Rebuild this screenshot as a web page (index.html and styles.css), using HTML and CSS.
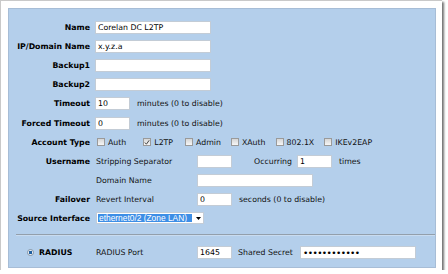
FILE: index.html
```html
<!DOCTYPE html>
<html lang="en">

<head>
  <meta charset="UTF-8">
  <title>L2TP Server Settings</title>
  <link rel="stylesheet" href="styles.css">
</head>

<body>
  <div class="shot_frame">
    <div class="vpn_panel">
      <div class="vpn_form">
        <div class="vpn_label">Name</div>
        <div class="vpn_value"><input class="vpn_input vpn_wide" type="text" value="Corelan DC L2TP"></div>

        <div class="vpn_label">IP/Domain Name</div>
        <div class="vpn_value"><input class="vpn_input vpn_wide" type="text" value="x.y.z.a"></div>

        <div class="vpn_label">Backup1</div>
        <div class="vpn_value"><input class="vpn_input vpn_wide" type="text" value=""></div>

        <div class="vpn_label">Backup2</div>
        <div class="vpn_value"><input class="vpn_input vpn_wide" type="text" value=""></div>

        <div class="vpn_label">Timeout</div>
        <div class="vpn_value">
          <input class="vpn_input vpn_short" type="text" value="10">
          <span class="vpn_after">minutes (0 to disable)</span>
        </div>

        <div class="vpn_label">Forced Timeout</div>
        <div class="vpn_value">
          <input class="vpn_input vpn_short" type="text" value="0">
          <span class="vpn_after">minutes (0 to disable)</span>
        </div>

        <div class="vpn_label">Account Type</div>
        <div class="vpn_value vpn_checks">
          <span class="vpn_check vpn_c1"><span class="vpn_box"></span>Auth</span>
          <span class="vpn_check vpn_c2"><span class="vpn_box vpn_box_on">
              <svg width="7" height="7" viewBox="0 0 7 7"><path d="M1 3.5 L2.8 5.5 L6 1" fill="none" stroke="#3a3a3a" stroke-width="1.1"/></svg>
            </span>L2TP</span>
          <span class="vpn_check vpn_c3"><span class="vpn_box"></span>Admin</span>
          <span class="vpn_check vpn_c4"><span class="vpn_box"></span>XAuth</span>
          <span class="vpn_check vpn_c5"><span class="vpn_box"></span>802.1X</span>
          <span class="vpn_check"><span class="vpn_box"></span>IKEv2EAP</span>
        </div>

        <div class="vpn_label">Username</div>
        <div class="vpn_value">
          <span class="vpn_sub">Stripping Separator</span>
          <input class="vpn_input vpn_short" type="text" value="">
          <span class="vpn_occ">Occurring</span>
          <input class="vpn_input vpn_short" type="text" value="1">
          <span class="vpn_after">times</span>
        </div>

        <div class="vpn_label"></div>
        <div class="vpn_value">
          <span class="vpn_sub">Domain Name</span>
          <input class="vpn_input vpn_wide" type="text" value="">
        </div>

        <div class="vpn_label">Failover</div>
        <div class="vpn_value">
          <span class="vpn_sub">Revert Interval</span>
          <input class="vpn_input vpn_short" type="text" value="0">
          <span class="vpn_after">seconds (0 to disable)</span>
        </div>

        <div class="vpn_label">Source Interface</div>
        <div class="vpn_value">
          <div class="vpn_select">
            <span class="vpn_selected">ethernet0/2 (Zone LAN)</span>
            <svg class="vpn_arrow" width="5" height="3" viewBox="0 0 5 3"><path d="M0 0 H5 L2.5 3 Z" fill="#000"/></svg>
          </div>
        </div>
      </div>

      <div class="vpn_sep"></div>

      <div class="vpn_form vpn_radius">
        <div class="vpn_radio_cell">
          <span class="vpn_radio"></span>RADIUS
        </div>
        <div class="vpn_value">
          <span class="vpn_sub">RADIUS Port</span>
          <input class="vpn_input vpn_short" type="text" value="1645">
          <span class="vpn_secret">Shared Secret</span>
          <input class="vpn_input vpn_wide vpn_pass" type="password" value="abcdefghijkl">
        </div>
      </div>
    </div>
  </div>
</body>

</html>
```

FILE: styles.css
```css
body {
  margin: 0;
  background: #fff;
  font-family: "DejaVu Sans", Verdana, sans-serif;
  font-size: 7.8px;
  color: #111;
}

.shot_frame {
  box-sizing: border-box;
  width: 442px;
  height: 270px;
  padding: 7px 6px 0 7px;
  background: #fff;
  border-top: 1px solid #c9c9c9;
  border-left: 1px solid #c9c9c9;
  box-shadow: 2px 2px 2px rgba(0, 0, 0, 0.55);
}

.vpn_panel {
  box-sizing: border-box;
  height: 260px;
  padding-top: 9px;
  background: #b4cfeb;
  border: 1px solid #a7bdd6;
}

.vpn_form {
  display: grid;
  grid-template-columns: 81px 1fr;
  grid-auto-rows: 19.1px;
  column-gap: 5px;
  align-items: center;
}

.vpn_label {
  text-align: right;
  font-weight: bold;
  color: #000;
  white-space: nowrap;
}

.vpn_value {
  display: flex;
  align-items: center;
  white-space: nowrap;
}

.vpn_input {
  box-sizing: border-box;
  height: 13px;
  margin: 0;
  padding: 0 2px;
  border: 1px solid #c3ccd6;
  background: #fff;
  font-family: "DejaVu Sans", Verdana, sans-serif;
  font-size: 7.8px;
  color: #000;
  outline: none;
}

.vpn_wide {
  width: 116px;
}

.vpn_short {
  width: 35px;
}

.vpn_pass {
  font-size: 9px;
  letter-spacing: -0.6px;
}

.vpn_after {
  margin-left: 7px;
}

.vpn_sub {
  width: 101px;
  padding-left: 1px;
}

.vpn_occ {
  width: 60px;
  padding-right: 5px;
  text-align: right;
}

.vpn_secret {
  margin-left: 6px;
  width: 62px;
}

.vpn_checks {
  padding-left: 2px;
}

.vpn_check {
  display: flex;
  align-items: center;
  margin-right: 10px;
}

.vpn_c1 {
  margin-right: 17px;
}

.vpn_c2 {
  margin-right: 12px;
}

.vpn_box {
  box-sizing: border-box;
  width: 8px;
  height: 8px;
  margin-right: 3px;
  border: 1px solid #9a9a9a;
  background: linear-gradient(#d6d6d6, #f6f6f6);
  display: flex;
  align-items: center;
  justify-content: center;
}

.vpn_select {
  box-sizing: border-box;
  width: 108px;
  height: 12px;
  margin-left: 1px;
  padding: 1px;
  display: flex;
  align-items: center;
  background: #fff;
  border: 1px solid #c3ccd6;
}

.vpn_selected {
  width: 93px;
  height: 100%;
  line-height: 9px;
  padding-left: 1px;
  background: #3d8ee6;
  color: #fff;
  font-family: "Liberation Sans", Arial, sans-serif;
  font-size: 8.4px;
  overflow: hidden;
}

.vpn_arrow {
  margin-left: 4px;
}

.vpn_sep {
  height: 0;
  margin: 6px 0 0 7px;
  border-top: 1px solid #939fab;
  border-bottom: 1px solid #c9dcf0;
}

.vpn_radius {
  margin-top: 7px;
}

.vpn_radio_cell {
  display: flex;
  align-items: center;
  padding-left: 18px;
  font-weight: bold;
  color: #000;
}

.vpn_radio {
  box-sizing: border-box;
  width: 7px;
  height: 7px;
  margin-right: 5px;
  border-radius: 50%;
  border: 1px solid #8a98a6;
  background: radial-gradient(circle, #1e5fa0 0 1.6px, #e8eef4 2px);
}
```
